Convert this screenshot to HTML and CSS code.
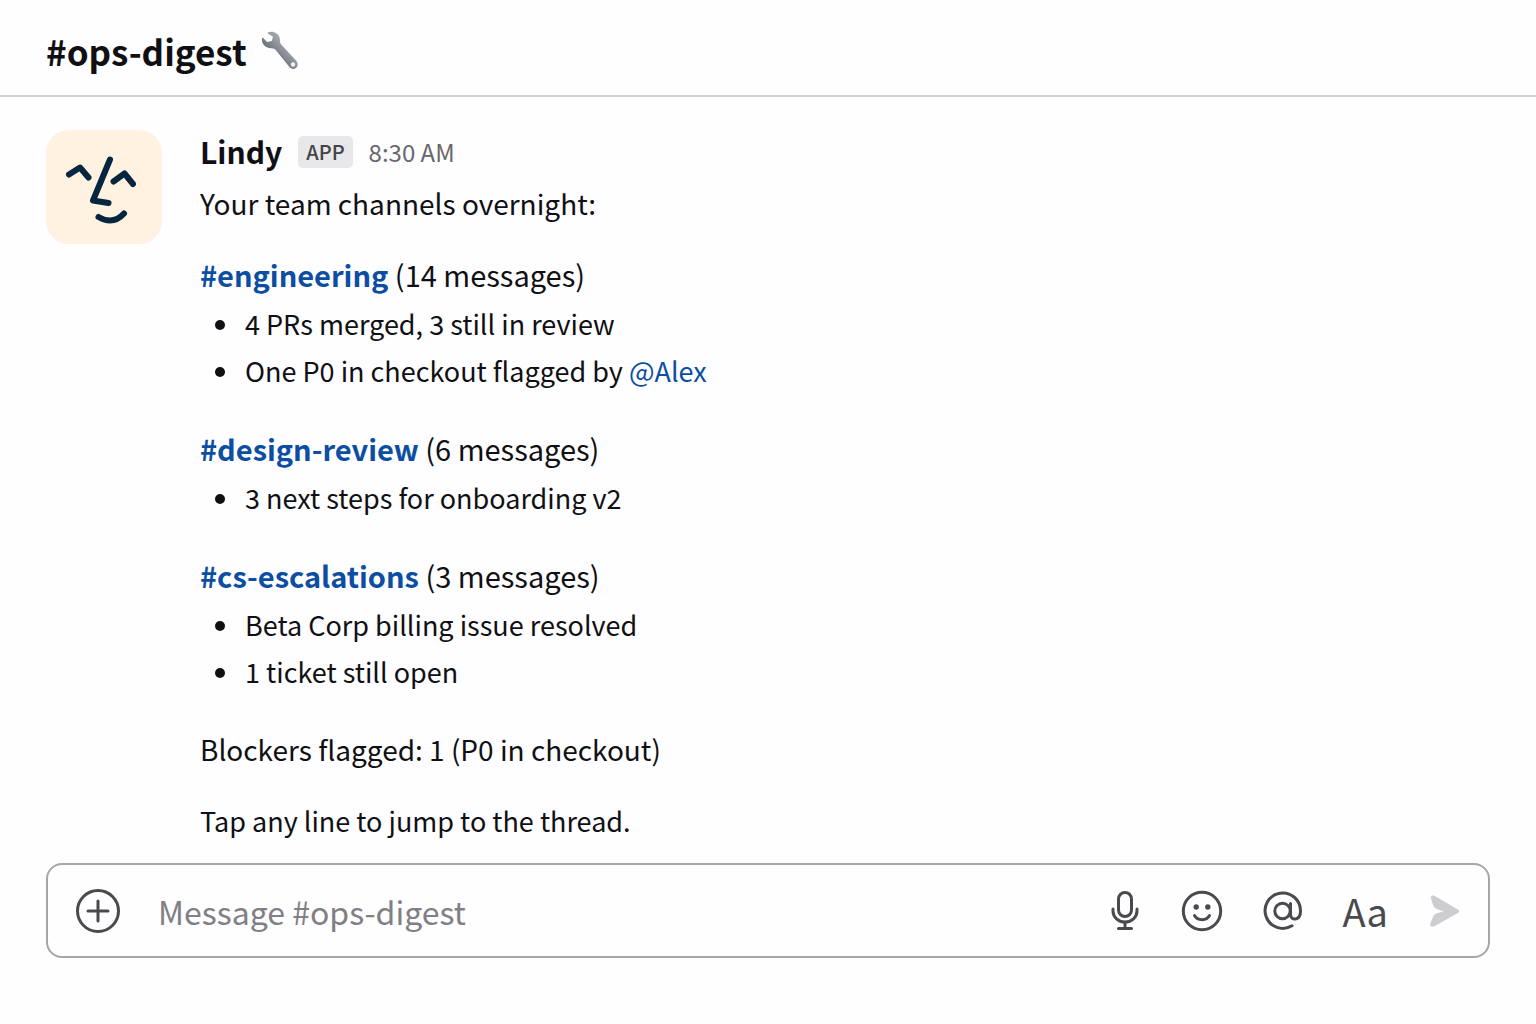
FILE: index.html
```html
<!DOCTYPE html>
<html lang="en">
<head>
  <meta charset="UTF-8">
  <meta name="viewport" content="width=device-width, initial-scale=1.0">
  <title>#ops-digest</title>
  <link rel="stylesheet" href="styles.css">
</head>
<body>
  <header class="channel-header">
    <h1>#ops-digest</h1>
    <svg class="wrench" viewBox="0 0 40 40" aria-hidden="true">
      <defs>
        <linearGradient id="steel" x1="0" y1="1" x2="1" y2="0">
          <stop offset="0.35" stop-color="#6f727b"/>
          <stop offset="0.65" stop-color="#a3a5ad"/>
        </linearGradient>
      </defs>
      <path fill="url(#steel)" d="M7.500 1.200C12 -.5 17.500 2 18.700 6.800C19.300 9.500 18.500 11.500 20 13.300L35 29.500C37.300 32 37.200 35 35.200 36.700C33.200 38.600 30 38.300 28.200 35.800L14.300 18.600C12.800 16.900 11 17.700 8.200 17C3.500 16 .3 12 1 7.500C1.200 6.600 1.900 6.500 2.500 7.200L6 11L10.800 10L12 5.800L7.300 2.800C6.600 2.200 6.700 1.500 7.500 1.200Z"/>
      <circle cx="32" cy="33.500" r="2.200" fill="#f1f0f3"/>
    </svg>
  </header>

  <main class="message">
    <svg class="avatar" viewBox="0 0 116 114" role="img" aria-label="Lindy">
      <rect width="116" height="114" rx="23" fill="#fff2e0"/>
      <g fill="none" stroke="#06263f" stroke-width="6" stroke-linecap="round" stroke-linejoin="round">
        <path d="M23 44.500L34 37.500L42.500 47.500"/>
        <path d="M64 29.500L47 70.500L62.500 73"/>
        <path d="M67.500 51.500L78.500 43.500L87 54"/>
        <path d="M52.500 87Q67 95.500 78 83.500"/>
      </g>
    </svg>
    <div class="message-body">
      <div class="message-meta">
        <span class="author">Lindy</span>
        <span class="badge">APP</span>
        <time class="time" datetime="08:30">8:30 AM</time>
      </div>
      <p>Your team channels overnight:</p>

      <section>
        <h2><a href="#engineering">#engineering</a> (14 messages)</h2>
        <ul>
          <li>4 PRs merged, 3 still in review</li>
          <li>One P0 in checkout flagged by <a href="#alex">@Alex</a></li>
        </ul>
      </section>

      <section>
        <h2><a href="#design-review">#design-review</a> (6 messages)</h2>
        <ul>
          <li>3 next steps for onboarding v2</li>
        </ul>
      </section>

      <section>
        <h2><a href="#cs-escalations">#cs-escalations</a> (3 messages)</h2>
        <ul>
          <li>Beta Corp billing issue resolved</li>
          <li>1 ticket still open</li>
        </ul>
      </section>

      <p>Blockers flagged: 1 (P0 in checkout)</p>
      <p class="hint">Tap any line to jump to the thread.</p>
    </div>
  </main>

  <form class="composer">
    <button type="button" aria-label="Add attachment">
      <svg width="44" height="44" viewBox="0 0 44 44">
        <circle cx="22" cy="22" r="20.500"/>
        <path d="M22 12v20M12 22h20"/>
      </svg>
    </button>
    <input type="text" placeholder="Message #ops-digest" aria-label="Message #ops-digest">
    <div class="tools">
      <button type="button" aria-label="Record audio">
        <svg width="32" height="42" viewBox="-2 0 32 42">
          <rect x="7.500" y="2.500" width="13" height="24" rx="6.500"/>
          <path d="M2 19v2a12 11 0 0 0 24 0v-2M14 32v6M7.500 38.500h13"/>
        </svg>
      </button>
      <button type="button" aria-label="Emoji">
        <svg width="42" height="42" viewBox="0 0 42 42">
          <circle cx="21" cy="21" r="18.700"/>
          <circle class="dot" cx="15.200" cy="17" r="2.700"/>
          <circle class="dot" cx="26.800" cy="17" r="2.700"/>
          <path d="M13.500 25.500C16.500 31 25.500 31 28.500 25.500"/>
        </svg>
      </button>
      <button type="button" aria-label="Mention">
        <svg width="40" height="40" viewBox="0 0 40 40">
          <circle cx="19.500" cy="20" r="7.700"/>
          <path d="M27.500 12.500V23.500C27.500 30 37.500 30 37.500 20A17.700 17.700 0 1 0 29 34.800"/>
        </svg>
      </button>
      <button type="button" class="format" aria-label="Formatting">Aa</button>
      <button type="submit" aria-label="Send">
        <svg width="32" height="32" viewBox="0 0 30 30">
          <path class="send" d="M2.500 2C3 .3 4.300 0 6 .8L28 13.700C29.700 14.700 29.700 15.800 28 16.800L5.500 29.500C3 30.500 1.500 29 2.200 26.800L5 20C6 17.800 8.500 16.800 15 15.300C8.500 13.500 6 12.500 5 10.300Z"/>
        </svg>
      </button>
    </div>
  </form>
</body>
</html>
```
FILE: styles.css
```css
* {
  box-sizing: border-box;
}
body {
  margin: 0;
  background-color: #fefdff;
  color: #101013;
  font-family: "Noto Sans CJK SC", "Noto Sans", sans-serif;
  font-size: 28px;
  line-height: 47px;
}
h1, h2, p, ul {
  margin: 0;
}
a {
  color: #0b4ea2;
  text-decoration: none;
}
button {
  display: flex;
  padding: 0;
  border: none;
  background: none;
  color: #4a4a4d;
  font-family: inherit;
  cursor: pointer;
}
.channel-header {
  display: flex;
  align-items: center;
  gap: 14px;
  padding: 27px 46px 21px;
  border-bottom: 2px solid #d3d2d5;
}
h1 {
  font-size: 35px;
  font-weight: 700;
}
.wrench {
  width: 40px;
  height: 40px;
}
.message {
  display: flex;
  gap: 38px;
  padding: 33px 46px 19px;
}
.avatar {
  flex: none;
  width: 116px;
  height: 114px;
}
.message-body {
  flex: 1;
}
.message-meta {
  display: flex;
  align-items: center;
  gap: 16px;
  margin-bottom: 7px;
  line-height: 43px;
}
.author {
  font-size: 30px;
  font-weight: 700;
}
.badge {
  padding: 0 8px;
  border-radius: 5px;
  background-color: #e8e7e9;
  color: #434346;
  font-size: 20px;
  font-weight: 500;
  line-height: 32px;
}
.time {
  color: #68676b;
  font-size: 24px;
}
.message-body p + p,
.message-body section,
.message-body section + p {
  margin-top: 24px;
}
h2 {
  margin-bottom: 2px;
  font-size: 29px;
  font-weight: 400;
}
h2 a {
  font-weight: 700;
}
ul {
  padding: 0 0 7px 15px;
  list-style: none;
}
li {
  display: flex;
  align-items: center;
  font-size: 27px;
  white-space: pre;
}
li::before {
  content: "";
  width: 10px;
  height: 10px;
  margin: 2px 20px 0 0;
  border-radius: 50%;
  background-color: #101013;
}
.hint {
  font-size: 27px;
}
.composer {
  display: flex;
  align-items: center;
  gap: 38px;
  margin: 0 46px;
  padding: 22px 28px;
  border: 2px solid #a6a5a9;
  border-radius: 16px;
}
.composer input {
  flex: 1;
  min-width: 0;
  height: 47px;
  padding: 0;
  border: none;
  outline: none;
  background: none;
  color: #101013;
  font-family: inherit;
  font-size: 32px;
}
.composer input::placeholder {
  color: #807f83;
  opacity: 1;
}
.composer svg {
  fill: none;
  stroke: currentColor;
  stroke-width: 3;
  stroke-linecap: round;
  stroke-linejoin: round;
}
.composer svg .dot {
  fill: currentColor;
  stroke: none;
}
.composer svg .send {
  fill: #cdccd0;
  stroke: none;
}
.tools {
  display: flex;
  align-items: center;
  gap: 40px;
}
.format {
  font-size: 38px;
  line-height: 47px;
}
```
